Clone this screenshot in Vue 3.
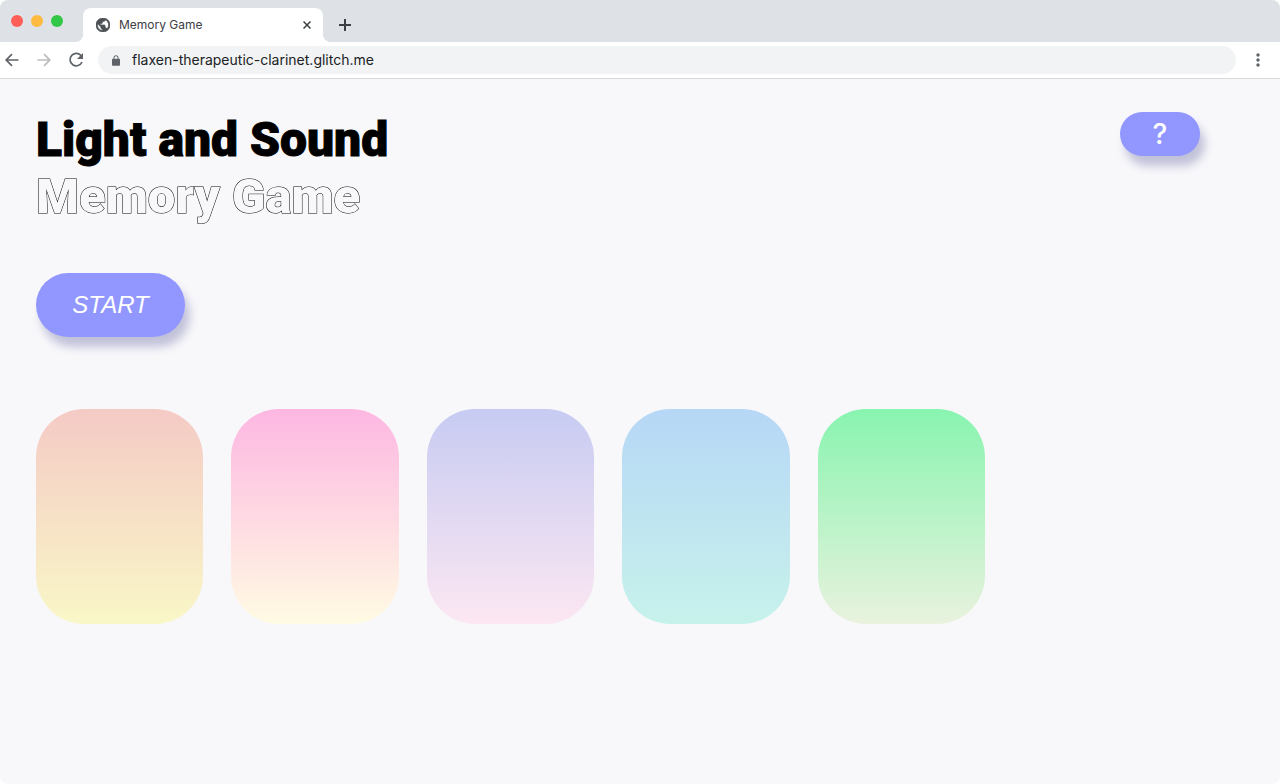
<script setup>
const pads = [
  { name: 'Peach', cls: 'peach' },
  { name: 'Pink', cls: 'pink' },
  { name: 'Lavender', cls: 'lavender' },
  { name: 'Blue', cls: 'blue' },
  { name: 'Green', cls: 'green' },
]
</script>

<template>
  <div class="window">
    <header class="chrome">
      <div class="tabstrip">
        <div class="lights">
          <span class="light red"></span>
          <span class="light yellow"></span>
          <span class="light lime"></span>
        </div>
        <div class="tab">
          <svg class="globe" viewBox="2 2 20 20" aria-hidden="true">
            <path d="M12 2C6.480 2 2 6.480 2 12s4.480 10 10 10 10-4.480 10-10S17.520 2 12 2zm-1 17.930c-3.950-.49-7-3.850-7-7.930 0-.62.08-1.210.21-1.790L9 15v1c0 1.100.9 2 2 2v1.930zm6.900-2.540c-.26-.81-1-1.390-1.900-1.390h-1v-3c0-.55-.45-1-1-1H8v-2h2c.55 0 1-.45 1-1V7h2c1.100 0 2-.9 2-2v-.41c2.930 1.190 5 4.060 5 7.410 0 2.080-.8 3.970-2.100 5.390z" />
          </svg>
          <span class="tab-title">Memory Game</span>
          <button class="icon-button close" aria-label="Close tab">
            <svg viewBox="0 0 8 8"><path d="M.5.5l7 7M7.500.5l-7 7" /></svg>
          </button>
        </div>
        <button class="icon-button add" aria-label="New tab">
          <svg viewBox="0 0 12 12"><path d="M6 0v12M0 6h12" /></svg>
        </button>
      </div>
      <div class="toolbar">
        <nav class="nav">
          <button class="icon-button" aria-label="Back">
            <svg viewBox="0 0 20 20"><path d="M16.500 10H4.500M10 4.200L4.200 10l5.800 5.800" /></svg>
          </button>
          <button class="icon-button faded" aria-label="Forward">
            <svg viewBox="0 0 20 20"><path d="M3.500 10h12M10 4.200l5.800 5.800-5.800 5.800" /></svg>
          </button>
          <button class="icon-button" aria-label="Reload">
            <svg viewBox="0 0 20 20">
              <path d="M15.500 6.200A6.200 6.200 0 1 0 16 12" />
              <path class="solid" d="M17 3v6h-6z" />
            </svg>
          </button>
        </nav>
        <div class="address">
          <svg class="lock" viewBox="4 1 16 21" aria-hidden="true">
            <path d="M18 8h-1V6c0-2.760-2.240-5-5-5S7 3.240 7 6v2H6c-1.100 0-2 .9-2 2v10c0 1.100.9 2 2 2h12c1.100 0 2-.9 2-2V10c0-1.100-.9-2-2-2zM8.900 8V6c0-1.710 1.390-3.100 3.100-3.100s3.100 1.390 3.100 3.100v2z" />
          </svg>
          <input class="url" type="text" aria-label="Address" value="flaxen-therapeutic-clarinet.glitch.me" />
        </div>
        <button class="icon-button menu" aria-label="Menu">
          <svg viewBox="0 0 4 14">
            <circle cx="2" cy="2" r="1.700" /><circle cx="2" cy="7" r="1.700" /><circle cx="2" cy="12" r="1.700" />
          </svg>
        </button>
      </div>
    </header>

    <main class="page">
      <div class="top">
        <h1 class="title">Light and Sound<span class="outline">Memory Game</span></h1>
        <button class="pill help" aria-label="Help">?</button>
      </div>
      <button class="pill start">START</button>
      <div class="pads">
        <button v-for="pad in pads" :key="pad.cls" class="pad" :class="pad.cls" :aria-label="pad.name"></button>
      </div>
    </main>
  </div>
</template>

<style>
html,
body {
  background: #fff;
}
</style>

<style scoped>
.window {
  display: flex;
  flex-direction: column;
  min-height: 100vh;
  overflow: hidden;
  border-radius: 8px;
  background: #f8f8fb;
  font-family: Inter, "Liberation Sans", sans-serif;
}
button {
  padding: 0;
  border: 0;
  background: none;
  font: inherit;
  cursor: pointer;
}
.chrome {
  background: #fff;
  border-bottom: 1px solid #d9dadc;
}
.tabstrip {
  display: flex;
  align-items: flex-end;
  height: 42px;
  background: #dee1e6;
}
.lights {
  display: flex;
  align-self: center;
  gap: 8px;
  width: 72px;
  padding-left: 11px;
}
.light {
  width: 12px;
  height: 12px;
  border-radius: 50%;
}
.red { background: #ff5f57; }
.yellow { background: #febb40; }
.lime { background: #33c748; }
.tab {
  position: relative;
  display: flex;
  align-items: center;
  box-sizing: border-box;
  width: 240px;
  height: 34px;
  padding: 0 12px 0 13px;
  border-radius: 8px 8px 0 0;
  background: #fff;
}
.tab::before,
.tab::after {
  content: "";
  position: absolute;
  bottom: 0;
  width: 8px;
  height: 8px;
}
.tab::before {
  right: 100%;
  background: radial-gradient(circle at 0 0, transparent 8px, #fff 8px);
}
.tab::after {
  left: 100%;
  background: radial-gradient(circle at 100% 0, transparent 8px, #fff 8px);
}
.globe {
  width: 14px;
  height: 14px;
  margin-right: 9px;
  fill: #4d5156;
  stroke: #4d5156;
  stroke-width: 1;
}
.tab-title {
  flex: 1;
  padding-bottom: 1px;
  font-size: 12px;
  color: #3c4043;
}
.icon-button {
  display: flex;
  align-items: center;
  justify-content: center;
}
.close svg {
  width: 8px;
  height: 8px;
  stroke: #3c4043;
  stroke-width: 1.500;
}
.add {
  height: 34px;
  margin-left: 16px;
}
.add svg {
  width: 12px;
  height: 12px;
  stroke: #3c4043;
  stroke-width: 2;
}
.toolbar {
  display: flex;
  align-items: center;
  height: 36px;
  padding-right: 20px;
}
.nav {
  display: flex;
  gap: 12px;
  width: 96px;
  padding-left: 2px;
}
.nav svg {
  width: 20px;
  height: 20px;
  fill: none;
  stroke: #5f6368;
  stroke-width: 1.700;
}
.nav .faded svg {
  stroke: #babcbe;
}
.nav .solid {
  fill: #5f6368;
  stroke: none;
}
.address {
  display: flex;
  flex: 1;
  align-items: center;
  height: 28px;
  padding-left: 14px;
  border-radius: 14px;
  background: #f1f3f4;
}
.lock {
  width: 8px;
  height: 11px;
  margin-right: 12px;
  fill: #5f6368;
}
.url {
  flex: 1;
  min-width: 0;
  padding: 0 0 2px;
  border: 0;
  outline: 0;
  background: none;
  font: 14px Inter, sans-serif;
  color: #202124;
}
.menu {
  margin-left: 20px;
}
.menu svg {
  width: 4px;
  height: 14px;
  fill: #5f6368;
}
.page {
  flex: 1;
  padding: 33px 80px 33px 36px;
}
.top {
  display: flex;
  align-items: flex-start;
  justify-content: space-between;
}
.title {
  margin: 0;
  font: 900 48px/56px Roboto, sans-serif;
  color: #000;
  -webkit-text-stroke: 1px #000;
}
.outline {
  display: block;
  font-size: 49px;
  line-height: 58px;
  color: #f8f8fb;
  paint-order: stroke fill;
}
.pill {
  display: block;
  border-radius: 32px;
  background: #9197ff;
  color: #fff;
  box-shadow: 5px 10px 10px #c1c1d9;
}
.help {
  width: 80px;
  height: 44px;
  font: 500 28px/42px Inter, sans-serif;
}
.start {
  width: 149px;
  height: 64px;
  margin-top: 47px;
  font: italic 24px "Liberation Sans", Arial, sans-serif;
}
.pads {
  display: grid;
  grid-template-columns: repeat(5, 1fr);
  gap: 28px;
  max-width: 949px;
  margin-top: 72px;
}
.pad {
  height: 215px;
  border-radius: 48px;
}
.peach { background: linear-gradient(#f4cac5, #f9f7c7); }
.pink { background: linear-gradient(#fdb7e2, #fffbe3); }
.lavender { background: linear-gradient(#c7cbf2, #fce7f2); }
.blue { background: linear-gradient(#b6d7f6, #c7f2eb); }
.green { background: linear-gradient(#88f4b0, #e9f2de); }
</style>
